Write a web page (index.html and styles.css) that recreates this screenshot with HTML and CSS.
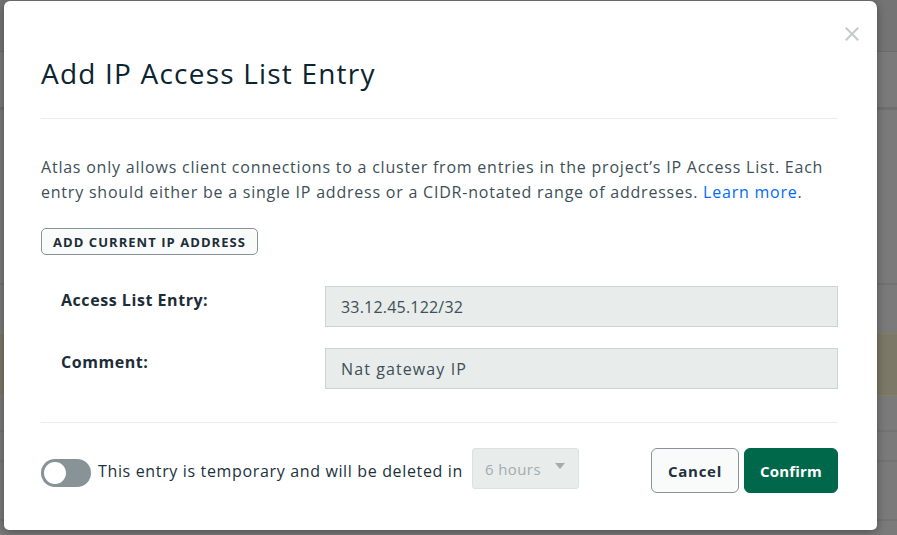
FILE: index.html
```html
<!DOCTYPE html>
<html>
<head>
<meta charset="utf-8">
<link rel="stylesheet" href="styles.css">
</head>
<body>
<div class="page">
  <div class="band band-top"></div>
  <div class="band band-dark"></div>
  <div class="band band-mid"></div>
  <div class="band band-warn"></div>
  <div class="band band-row"></div>
  <div class="band band-row3"></div>
  <div class="band band-row2"></div>
</div>
<div class="modal">
  <button class="close" aria-label="Close">
    <svg width="14" height="14" viewBox="0 0 14 14"><path d="M1.5 1.5L12.5 12.5M12.5 1.5L1.5 12.5" stroke="#c9cccd" stroke-width="2.2" stroke-linecap="square"/></svg>
  </button>
  <h1 class="title">Add IP Access List Entry</h1>
  <hr class="rule">
  <p class="desc">Atlas only allows client connections to a cluster from entries in the project’s IP Access List. Each entry should either be a single IP address or a CIDR-notated range of addresses. <a class="link">Learn more</a>.</p>
  <button class="add-btn">ADD CURRENT IP ADDRESS</button>
  <div class="form">
    <div class="row">
      <label class="label">Access List Entry:</label>
      <div class="input input-ip">33.12.45.122/32</div>
    </div>
    <div class="row">
      <label class="label">Comment:</label>
      <div class="input">Nat gateway IP</div>
    </div>
  </div>
  <hr class="rule rule2">
  <div class="footer">
    <div class="temp">
      <span class="toggle"><span class="knob"></span></span>
      <span class="temp-text">This entry is temporary and will be deleted in</span>
      <span class="select">6 hours <span class="caret"></span></span>
    </div>
    <div class="actions">
      <button class="btn cancel">Cancel</button>
      <button class="btn confirm">Confirm</button>
    </div>
  </div>
</div>
</body>
</html>
```

FILE: styles.css
```css
* { box-sizing: border-box; }
html, body { margin: 0; padding: 0; }
body {
  width: 897px;
  height: 535px;
  overflow: hidden;
  background: #7a7a7a;
  font-family: "Open Sans", "Noto Sans", sans-serif;
  position: relative;
}
.page {
  position: absolute;
  inset: 0;
  display: flex;
  flex-direction: column;
  overflow: hidden;
}
.band { flex: none; }
.band-top { height: 52px; background: #747474; border-bottom: 1px solid #6c6c6c; }
.band-dark { height: 58px; border-bottom: 3px solid #6f6f6f; }
.band-mid { height: 175px; border-bottom: 2px solid #727272; }
.band-warn { height: 63px; margin-top: 48px; background: #7b7868; border-top: 1px solid #858058; border-bottom: 1px solid #858058; }
.band-row { height: 36px; border-bottom: 2px solid #737373; }
.band-row3 { height: 30px; border-bottom: 2px solid #737373; }
.band-row2 { height: 59px; border-bottom: 2px solid #737373; }

.modal {
  position: absolute;
  left: 4px;
  top: 1px;
  width: 873px;
  height: 529px;
  background: #fff;
  border-radius: 6px 7px 5px 5px;
  box-shadow: 0 2px 10px rgba(0,0,0,0.35);
  padding: 55px 39px 0 37px;
}
.close {
  position: absolute;
  top: 25px;
  right: 17px;
  width: 16px;
  height: 16px;
  padding: 1px;
  border: 0;
  background: none;
}
.title {
  margin: 0;
  font-size: 28px;
  line-height: 34px;
  font-weight: 400;
  color: #0b2530;
  letter-spacing: 1.2px;
}
.rule {
  margin: 28px 0 0;
  border: 0;
  height: 1px;
  background: #e9edec;
}
.desc {
  margin: 36px 0 0;
  font-size: 16px;
  line-height: 25px;
  color: #3d4f58;
  letter-spacing: 0.78px;
}
.link { color: #016bf8; text-decoration: none; }
.add-btn {
  margin-top: 23px;
  height: 27px;
  padding: 0 11px 0 11px;
  border: 1px solid #889397;
  border-radius: 5px;
  background: #f9fbfa;
  font-family: "Open Sans", sans-serif;
  font-weight: 700;
  font-size: 13px;
  letter-spacing: 1.05px;
  color: #1c2d38;
}
.form {
  margin-top: 31px;
  padding-left: 20px;
  display: flex;
  flex-direction: column;
  gap: 21px;
}
.row {
  display: flex;
  align-items: center;
}
.label {
  width: 264px;
  flex: none;
  font-weight: 700;
  font-size: 16px;
  color: #1c2d38;
  margin-top: -14px;
  letter-spacing: 0.55px;
}
.input {
  flex: 1;
  height: 41px;
  background: #e8ecea;
  border: 1px solid #cdd3d1;
  padding: 0 15px;
  display: flex;
  align-items: center;
  font-size: 16px;
  color: #3d4f58;
  letter-spacing: 1.1px;
}
.input-ip { letter-spacing: 0.2px; }
.rule2 { margin-top: 33px; }
.footer {
  margin-top: 25px;
  display: flex;
  align-items: center;
  justify-content: space-between;
}
.temp {
  display: flex;
  align-items: center;
}
.toggle {
  width: 50px;
  height: 28px;
  border-radius: 14px;
  background: #889397;
  position: relative;
  margin-top: 4px;
  flex: none;
}
.knob {
  position: absolute;
  left: 3px;
  top: 3px;
  width: 22px;
  height: 22px;
  border-radius: 50%;
  background: #fff;
}
.temp-text {
  margin-left: 7px;
  font-size: 16px;
  color: #21313c;
  letter-spacing: 0.65px;
  margin-top: 1px;
}
.select {
  margin-left: 9px;
  width: 107px;
  height: 41px;
  background: #e8edeb;
  border: 1px solid #dbe2df;
  border-radius: 3px;
  padding-left: 12px;
  display: flex;
  align-items: center;
  font-size: 15px;
  color: #a3acae;
  letter-spacing: 0.4px;
  position: relative;
  margin-top: -4px;
}
.caret {
  position: absolute;
  right: 13px;
  top: 14px;
  width: 0;
  height: 0;
  border-left: 5px solid transparent;
  border-right: 5px solid transparent;
  border-top: 6px solid #a3acae;
}
.actions {
  display: flex;
  gap: 5px;
}
.btn {
  height: 45px;
  border-radius: 6px;
  font-family: "Open Sans", sans-serif;
  font-weight: 700;
  font-size: 15px;
  letter-spacing: 0.2px;
  padding: 0;
}
.cancel {
  width: 88px;
  background: #f9fbfa;
  border: 1px solid #889397;
  color: #21313c;
  letter-spacing: 0.7px;
}
.confirm {
  width: 94px;
  background: #00684a;
  border: 1px solid #00684a;
  color: #fff;
}
```
